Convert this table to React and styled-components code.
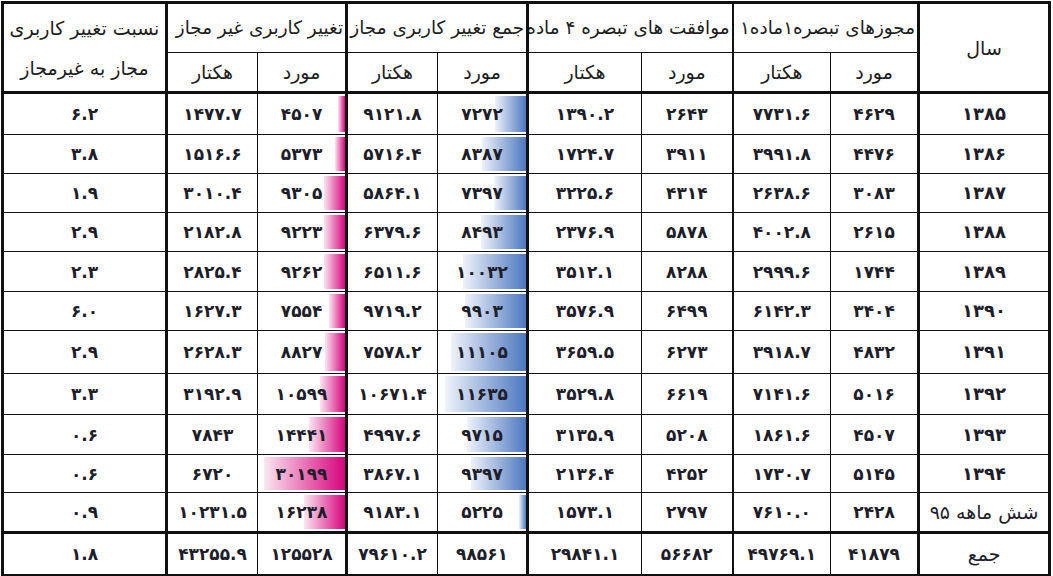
import React from "react";
import styled, { createGlobalStyle } from "styled-components";

const GlobalStyle = createGlobalStyle`
  html, body { margin: 0; padding: 0; background: #ffffff; }
  body { font-family: "DejaVu Sans", "Noto Sans", sans-serif; color: #1d1d22; }
`;

const fa = (s) => String(s).replace(/[0-9]/g, (d) => "۰۱۲۳۴۵۶۷۸۹"[d]);

// columns ordered right-to-left
const COL_WIDTHS = [131, 88, 98, 91, 114, 90, 91, 89, 91, 164];
const LEFT_BORDER = [3, 1, 2, 1, 3, 1, 3, 1, 3, 3];

const rows = [
  ["1385", 4629, "7731.6", 2643, "1390.2", 7272, "9121.8", 4507, "1477.7", "6.2"],
  ["1386", 4476, "3991.8", 3911, "1724.7", 8387, "5716.4", 5373, "1516.6", "3.8"],
  ["1387", 3083, "2638.6", 4314, "3225.6", 7397, "5864.1", 9305, "3010.4", "1.9"],
  ["1388", 2615, "4002.8", 5878, "2376.9", 8493, "6379.6", 9223, "2182.8", "2.9"],
  ["1389", 1744, "2999.6", 8288, "3512.1", 10032, "6511.6", 9262, "2825.4", "2.3"],
  ["1390", 3404, "6142.3", 6499, "3576.9", 9903, "9719.2", 7554, "1627.3", "6.0"],
  ["1391", 4832, "3918.7", 6273, "3659.5", 11105, "7578.2", 8827, "2628.3", "2.9"],
  ["1392", 5016, "7141.6", 6619, "3529.8", 11635, "10671.4", 10599, "3192.9", "3.3"],
  ["1393", 4507, "1861.6", 5208, "3135.9", 9715, "4997.6", 14441, "7843", "0.6"],
  ["1394", 5145, "1730.7", 4252, "2136.4", 9397, "3867.1", 30199, "6720", "0.6"],
  ["شش ماهه 95", 2428, "7610.0", 2797, "1573.1", 5225, "9183.1", 16238, "10231.5", "0.9"],
];
const ROW_HEIGHTS = [40, 38, 38, 38, 39, 38, 42, 40, 39, 37, 38];
const total = ["جمع", 41879, "49769.1", 56682, "29841.1", 98561, "79610.2", 125528, "43255.9", "1.8"];

const BAR_COLS = {
  5: { from: "#eef2fa", to: "#4d78bf", min: 5225, max: 11635 },
  7: { from: "#fbe6f1", to: "#d6047c", min: 4507, max: 30199 },
};
const barWidth = (v, { min, max }) => 7.5 + ((v - min) / (max - min)) * 73.5;

const Table = styled.table`
  direction: rtl;
  border-collapse: collapse;
  table-layout: fixed;
  width: 1050px;
  margin: 1px 0 0 1px;
  border: 3px solid #111;
`;

const Th = styled.th`
  border-left: ${(p) => p.$bl}px solid #111;
  border-bottom: ${(p) => p.$bb}px solid #111;
  height: ${(p) => p.$h}px;
  padding: 0 ${(p) => (p.$start ? 2 : 3)}px;
  font-weight: normal;
  font-size: ${(p) => (p.$start ? "18.4px" : "19px")};
  color: #1d1d22;
  text-align: ${(p) => (p.$start ? "right" : "center")};
  white-space: nowrap;
  overflow: hidden;
  line-height: ${(p) => (p.$lines ? "40px" : "22px")};
`;

const Td = styled.td`
  position: relative;
  border-left: ${(p) => p.$bl}px solid #111;
  border-bottom: ${(p) => p.$bb}px solid #111;
  height: ${(p) => p.$h}px;
  padding: 0;
  text-align: center;
  white-space: nowrap;
  line-height: 20px;
  font-weight: ${(p) => (p.$label ? "normal" : "bold")};
  font-size: ${(p) => (p.$label ? "19px" : p.$year ? "18px" : "17px")};
  color: #1e1e2a;
`;

const Bar = styled.div`
  position: absolute;
  right: 0;
  top: 2px;
  bottom: 2px;
  background: linear-gradient(to right, ${(p) => p.$from}, ${(p) => p.$to});
`;

const Value = styled.span`
  position: relative;
`;

function DataRow({ cells, height, last, isTotal }) {
  return (
    <tr>
      {cells.map((c, i) => {
        const bar = !isTotal && BAR_COLS[i];
        const label = i === 0 && isNaN(Number(c));
        return (
          <Td key={i} $bl={LEFT_BORDER[i]} $bb={last ? 3 : 1} $h={height} $label={label} $year={i === 0 && !label}>
            {bar && <Bar $from={bar.from} $to={bar.to} style={{ width: `${barWidth(c, bar)}px` }} />}
            <Value>{fa(c)}</Value>
          </Td>
        );
      })}
    </tr>
  );
}

const groups = [
  "مجوزهای تبصره۱ماده۱",
  "موافقت های تبصره ۴ ماده ۱",
  "جمع تغییر کاربری مجاز",
  "تغییر کاربری غیر مجاز",
];

export default function App() {
  return (
    <>
      <GlobalStyle />
      <Table>
        <colgroup>
          {COL_WIDTHS.map((w, i) => (
            <col key={i} style={{ width: `${w}px` }} />
          ))}
        </colgroup>
        <thead>
          <tr>
            <Th rowSpan={2} $bl={3} $bb={3} $h={48}>سال</Th>
            {groups.map((g, gi) => (
              <Th key={g} colSpan={2} $bl={LEFT_BORDER[gi * 2 + 2]} $bb={1} $h={48} $start>
                {g}
              </Th>
            ))}
            <Th rowSpan={2} $bl={3} $bb={3} $h={48} $lines>
              نسبت تغییر کاربری
              <br />
              مجاز به غیرمجاز
            </Th>
          </tr>
          <tr>
            {[1, 2, 3, 4, 5, 6, 7, 8].map((i) => (
              <Th key={i} $bl={LEFT_BORDER[i]} $bb={3} $h={38}>
                {i % 2 === 1 ? "مورد" : "هکتار"}
              </Th>
            ))}
          </tr>
        </thead>
        <tbody>
          {rows.map((r, ri) => (
            <DataRow key={ri} cells={r} height={ROW_HEIGHTS[ri]} last={ri === rows.length - 1} />
          ))}
          <DataRow cells={total} height={40} last isTotal />
        </tbody>
      </Table>
    </>
  );
}
